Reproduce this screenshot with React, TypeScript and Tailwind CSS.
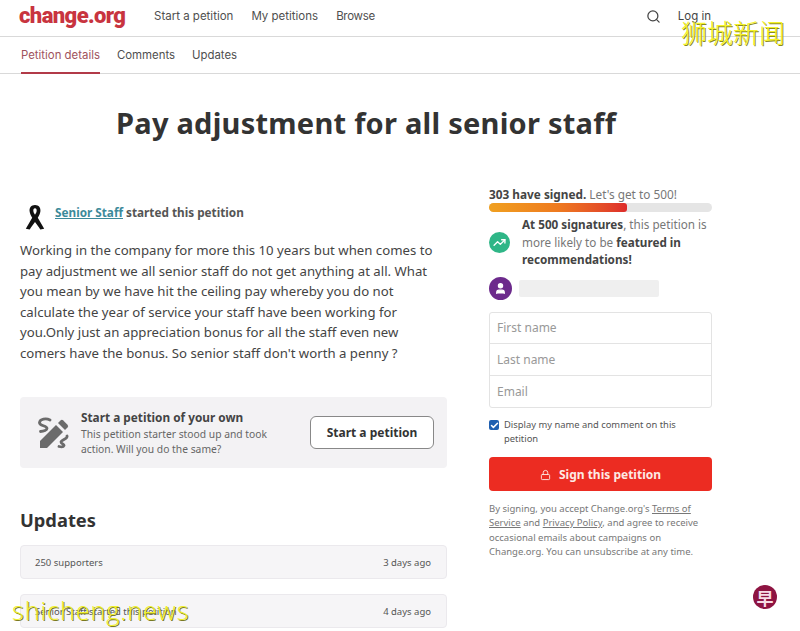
import { Search, User, Lock, TrendingUp, Check } from "lucide-react";

const NOTO = "font-['Noto_Sans',sans-serif]";

function Header() {
  return (
    <header className="flex h-[37px] items-center border-b border-[#d9d9d9] pb-[3px] pl-[19px] font-['Inter',sans-serif]">
      <span className="w-[135px] pb-[1px] font-['Roboto',sans-serif] text-[22px] leading-none font-black tracking-[-0.6px] text-[#c8343f]">
        change.org
      </span>
      <nav className="flex gap-[18px] text-[11.500px] text-[#4f4f4f]">
        <span>Start a petition</span>
        <span>My petitions</span>
        <span className="tracking-[-0.3px]">Browse</span>
      </nav>
      <Search className="mr-[17px] ml-auto mb-[1px] h-[15px] w-[15px] text-[#444]" strokeWidth={2} />
      <span className="mr-[89px] text-[11.500px] text-[#444]">Log in</span>
    </header>
  );
}

function SubNav() {
  return (
    <div className="flex h-[37px] gap-[17px] border-b border-[#d9d9d9] pl-[21px] font-['Inter',sans-serif] text-[11.400px] text-[#4f4f4f]">
      <span className="flex h-[37px] items-center border-b-2 border-[#b23a48] pt-[2px] text-[#a0525c]">Petition details</span>
      <span className="flex h-[36px] items-center pt-[2px]">Comments</span>
      <span className="flex h-[36px] items-center pt-[2px]">Updates</span>
    </div>
  );
}

function Ribbon() {
  return (
    <svg viewBox="0 0 20 30" className="h-[29px] w-[20px]">
      <path
        d="M10 1c4 0 6 3 5.600 6.500-.3 2.600-1.500 4.800-2.700 6.700L19.500 25.500 15.500 26.500 14 24 10 18.500 6 24 4.500 26.500.500 25.500 7.100 14.200C5.900 12.300 4.700 10.100 4.400 7.500 4 4 6 1 10 1zm0 3.500c-1.300 0-1.900 1.300-1.700 2.800.1 1.200.9 2.700 1.700 3.900.8-1.200 1.600-2.700 1.700-3.900.2-1.500-.4-2.800-1.700-2.800z"
        fill="#111"
      />
    </svg>
  );
}

function PencilSquiggle() {
  return (
    <svg viewBox="0 0 32 32" className="h-[32px] w-[32px]" fill="#6b6b6b">
      <path d="M3 31v-7L19 8l7 7-16 16H3z" />
      <path d="M21 6l2.500-2.500a2 2 0 0 1 2.800 0l4.200 4.200a2 2 0 0 1 0 2.800L28 13l-7-7z" />
      <path
        d="M13 3C9 1 3 2 2.500 5.500 2 9 10 8.500 10 11.500c0 1.500-3 3-6.500 3M30 19c1 3-6 3.500-6 6 0 2 3.500 2 3 3.500-.5 1.500-3 1.500-5 1"
        fill="none"
        stroke="#6b6b6b"
        strokeWidth="2.800"
        strokeLinecap="round"
      />
    </svg>
  );
}

function UpdateRow({ label, when }: { label: string; when: string }) {
  return (
    <div className="flex h-[34px] items-center justify-between rounded-[4px] border border-[#ebe9ed] bg-[#f6f5f7] pt-[3px] pr-[15px] pl-[14px] text-[9.500px] text-[#555]">
      <span>{label}</span>
      <span>{when}</span>
    </div>
  );
}

function Field({ label }: { label: string }) {
  return (
    <div className="flex h-[31.500px] items-center border-b border-[#e3e3e3] px-[7px] pt-[1px] text-[12px] text-[#999] last:border-b-0">
      {label}
    </div>
  );
}

function LeftColumn() {
  return (
    <div className="w-[427px]">
      <div className="flex items-start pl-[5px]">
        <Ribbon />
        <p className="ml-[10px] text-[11.750px] leading-[16px] font-bold text-[#555]">
          <span className="text-[#3c8a9a] underline">Senior Staff</span> started this petition
        </p>
      </div>
      <p className="mt-[7px] text-[13.200px] leading-[20.500px] text-[#444]">
        Working in the company for more this 10 years but when comes to pay adjustment we all senior staff do not get anything at all. What you mean by we have hit the ceiling pay whereby you do not calculate the year of service your staff have been working for you.Only just an appreciation bonus for all the staff even new comers have the bonus. So senior staff don't worth a penny ?
      </p>

      <div className="mt-[34px] flex h-[71px] items-center rounded-[4px] bg-[#f3f2f4] pr-[13px] pl-[17px]">
        <PencilSquiggle />
        <div className="ml-[12px] w-[216px]">
          <p className="text-[11.800px] leading-[16px] font-bold text-[#444]">Start a petition of your own</p>
          <p className="mt-[2px] text-[10.300px] leading-[15px] text-[#666]">
            This petition starter stood up and took action. Will you do the same?
          </p>
        </div>
        <button className="ml-auto h-[33px] w-[124px] rounded-[6px] border border-[#888] bg-white text-[12px] font-bold text-[#333]">
          Start a petition
        </button>
      </div>

      <h2 className="mt-[39px] text-[18.300px] leading-[26px] font-bold text-[#333]">Updates</h2>
      <div className="mt-[12px] flex flex-col gap-[15px]">
        <UpdateRow label="250 supporters" when="3 days ago" />
        <UpdateRow label="Senior Staff started this petition" when="4 days ago" />
      </div>
    </div>
  );
}

function SignBox() {
  return (
    <div className="w-[223px]">
      <p className="text-[11.800px] leading-[15px] text-[#777]">
        <b className="text-[#444]">303 have signed.</b> Let's get to 500!
      </p>
      <div className="mt-[1px] h-[9px] overflow-hidden rounded-full bg-[#e5e5e5]">
        <div className="h-full w-[62%] rounded-r-[3px] bg-gradient-to-r from-[#f0a020] via-[#ee7a20] to-[#dd2a2a]" />
      </div>
      <div className="mt-[4px] flex items-center gap-[12px]">
        <span className="flex h-[21px] w-[21px] shrink-0 items-center justify-center rounded-full bg-[#2fb687]">
          <TrendingUp className="h-[13px] w-[13px] text-white" strokeWidth={2.500} />
        </span>
        <p className="text-[11.700px] leading-[17.500px] text-[#777]">
          <b className="text-[#444]">At 500 signatures</b>, this petition is more likely to be{" "}
          <b className="text-[#444]">featured in recommendations!</b>
        </p>
      </div>
      <div className="mt-[8px] flex items-center gap-[7px]">
        <span className="flex h-[23px] w-[23px] items-center justify-center rounded-full bg-[#6c2a8c]">
          <User className="h-[13px] w-[13px] text-white" fill="white" />
        </span>
        <span className="h-[17px] w-[140px] rounded-[2px] bg-[#efefef]" />
      </div>
      <div className="mt-[12px] rounded-[3px] border border-[#e3e3e3]">
        <Field label="First name" />
        <Field label="Last name" />
        <Field label="Email" />
      </div>
      <div className="mt-[10px] flex items-start gap-[5px]">
        <span className="mt-[2px] flex h-[10px] w-[10px] shrink-0 items-center justify-center rounded-[2px] bg-[#1f5fb0]">
          <Check className="h-[9px] w-[9px] text-white" strokeWidth={4} />
        </span>
        <p className="text-[9.400px] leading-[14px] text-[#555]">Display my name and comment on this petition</p>
      </div>
      <button className="mt-[11px] flex h-[34px] w-full items-center justify-center gap-[8px] rounded-[4px] bg-[#ec2c22] pt-[1px] text-[12px] font-bold text-[#fde9e4]">
        <Lock className="h-[12px] w-[11px]" />
        Sign this petition
      </button>
      <p className="mt-[11px] text-[9.500px] leading-[14.300px] text-[#777]">
        By signing, you accept Change.org's <span className="underline">Terms of Service</span> and{" "}
        <span className="underline">Privacy Policy</span>, and agree to receive occasional emails about campaigns on Change.org. You can unsubscribe at any time.
      </p>
    </div>
  );
}

export default function App() {
  return (
    <div className={`relative h-[631px] w-[800px] overflow-hidden bg-white ${NOTO}`}>
      <Header />
      <SubNav />
      <h1 className="mt-[28px] pl-[116px] text-[29px] leading-[42px] font-bold tracking-[0.25px] text-[#333]">
        Pay adjustment for all senior staff
      </h1>
      <div className="mt-[43px] flex gap-[42px] pl-[20px]">
        <div className="pt-[17px]">
          <LeftColumn />
        </div>
        <SignBox />
      </div>

      {/* site watermarks burned into the screenshot */}
      <span className="absolute top-[16px] left-[681px] font-['Noto_Sans_CJK_SC',sans-serif] text-[26px] leading-[32px] font-light text-[#f4f22c] [text-shadow:1px_1px_0_#8a8a20]">
        狮城新闻
      </span>
      <span className="absolute top-[595px] left-[12px] font-['Open_Sans',sans-serif] text-[25px] leading-[30px] font-light tracking-[1px] text-[#efef30] [text-shadow:1px_1px_0_#7a7a20]">
        shicheng.news
      </span>
      <span className="absolute top-[585px] left-[753px] flex h-[24px] w-[24px] items-center justify-center rounded-full bg-[#8e1442] font-['Noto_Sans_CJK_SC',sans-serif] text-[17px] leading-none font-bold text-[#f7dce5]">
        早
      </span>
    </div>
  );
}
